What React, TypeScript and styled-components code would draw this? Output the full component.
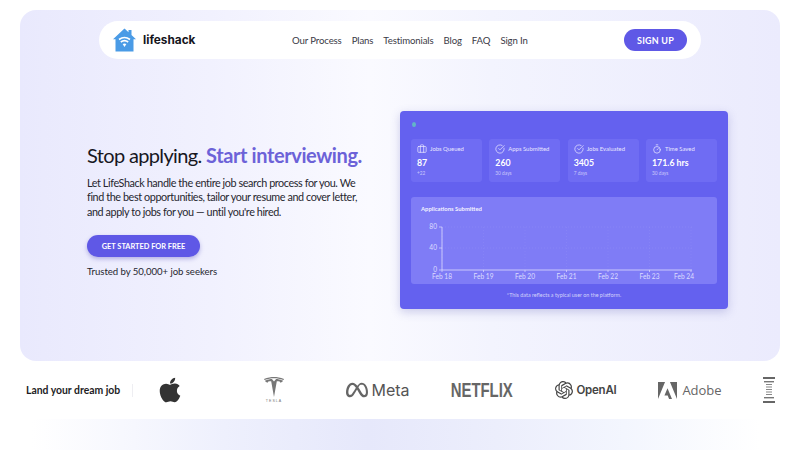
import styled, { createGlobalStyle } from "styled-components";
import { Briefcase, CircleCheckBig, Timer } from "lucide-react";
import { FaApple } from "react-icons/fa";
import { SiAdobe, SiMeta, SiOpenai, SiTesla } from "react-icons/si";

const GlobalStyle = createGlobalStyle`
  html, body {
    margin: 0;
    padding: 0;
    background: #fff;
    overflow: hidden;
  }
  * {
    box-sizing: border-box;
  }
  body {
    font-family: "Lato", "Liberation Sans", sans-serif;
    color: #1f1f2b;
  }
`;

const stats = [
  { title: "Jobs Queued", value: "87", note: "+22", Icon: Briefcase },
  { title: "Apps Submitted", value: "260", note: "30 days", Icon: CircleCheckBig },
  { title: "Jobs Evaluated", value: "3405", note: "7 days", Icon: CircleCheckBig },
  { title: "Time Saved", value: "171.6 hrs", note: "30 days", Icon: Timer },
];

const links = ["Our Process", "Plans", "Testimonials", "Blog", "FAQ", "Sign In"];
const days = ["Feb 18", "Feb 19", "Feb 20", "Feb 21", "Feb 22", "Feb 23", "Feb 24"];

function HouseLogo() {
  return (
    <svg width="23" height="24" viewBox="0 0 23 24">
      <path
        d="M11.5 0.5 L15.5 4.2 V2 H18.5 V7 L23 11.2 H20.5 V23.5 H2.5 V11.2 H0 Z"
        fill="#4a9be6"
      />
      <path d="M6 11.5 Q11.5 7.5 17 11.5" stroke="#fff" strokeWidth="1.6" fill="none" />
      <path d="M7.8 14 Q11.5 11.3 15.2 14" stroke="#fff" strokeWidth="1.6" fill="none" />
      <path d="M9.6 16 L11.5 19 L13.4 16 Q11.5 14.8 9.6 16 Z" fill="#fff" />
    </svg>
  );
}

function SubmittedChart() {
  return (
    <svg width="306" height="70" viewBox="0 0 306 70">
      {[0, 1, 2, 3, 4, 5, 6].map((i) => (
        <line
          key={i}
          x1={31 + i * 41.5}
          x2={31 + i * 41.5}
          y1="15"
          y2="58"
          stroke="#ffffff"
          strokeOpacity="0.06"
          strokeDasharray="1 2"
        />
      ))}
      <line x1="31" x2="281" y1="36" y2="36" stroke="#fff" strokeOpacity="0.07" strokeDasharray="1 2" />
      <line x1="31" x2="281" y1="15" y2="15" stroke="#fff" strokeOpacity="0.07" strokeDasharray="1 2" />
      <path d="M31 15 V58 H281" stroke="#dedcff" strokeWidth="0.8" fill="none" />
      {[15, 36, 58].map((y) => (
        <line key={y} x1="28" x2="31" y1={y} y2={y} stroke="#dedcff" strokeWidth="0.7" />
      ))}
      {days.map((d, i) => (
        <g key={d}>
          <line
            x1={31 + i * 41.5}
            x2={31 + i * 41.5}
            y1="58"
            y2="60"
            stroke="#dedcff"
            strokeWidth="0.7"
          />
          <ChartLabel x={i === 6 ? 273 : 31 + i * 41.5} y="67" textAnchor="middle">
            {d}
          </ChartLabel>
        </g>
      ))}
      <ChartLabel x="26" y="17.2" textAnchor="end">80</ChartLabel>
      <ChartLabel x="26" y="38.2" textAnchor="end">40</ChartLabel>
      <ChartLabel x="26" y="60.2" textAnchor="end">0</ChartLabel>
    </svg>
  );
}

function StackMark() {
  return (
    <svg width="12" height="26" viewBox="0 0 12 26">
      <rect x="0" y="0" width="12" height="2" fill="#666" />
      <rect x="1" y="4" width="10" height="1.4" fill="#777" />
      {[7, 9.5, 12, 14.5, 17].map((y) => (
        <rect key={y} x="3" y={y} width="6" height="1" fill="#888" />
      ))}
      <rect x="1" y="20" width="10" height="1.4" fill="#777" />
      <rect x="0" y="24" width="12" height="2" fill="#666" />
    </svg>
  );
}

export default function App() {
  return (
    <>
      <GlobalStyle />
      <Page>
        <Hero>
          <Nav>
            <Brand>
              <HouseLogo />
              <BrandName>lifeshack</BrandName>
            </Brand>
            <NavLinks>
              {links.map((l) => (
                <NavLink key={l}>{l}</NavLink>
              ))}
            </NavLinks>
            <SignUp>SIGN UP</SignUp>
          </Nav>

          <HeroBody>
            <Pitch>
              <Headline>
                Stop applying. <Accent>Start interviewing.</Accent>
              </Headline>
              <Lead>
                Let LifeShack handle the entire job search process for you. We
                <br />
                find the best opportunities, tailor your resume and cover letter,
                <br />
                and apply to jobs for you — until you're hired.
              </Lead>
              <StartButton>GET STARTED FOR FREE</StartButton>
              <Trusted>Trusted by 50,000+ job seekers</Trusted>
            </Pitch>

            <Dashboard>
              <StatusDot />
              <StatGrid>
                {stats.map(({ title, value, note, Icon }) => (
                  <StatCard key={title}>
                    <StatHead>
                      <Icon size={10} strokeWidth={1.8} />
                      <span>{title}</span>
                    </StatHead>
                    <StatValue>{value}</StatValue>
                    <StatNote>{note}</StatNote>
                  </StatCard>
                ))}
              </StatGrid>
              <ChartPanel>
                <ChartTitle>Applications Submitted</ChartTitle>
                <SubmittedChart />
              </ChartPanel>
              <Footnote>*This data reflects a typical user on the platform.</Footnote>
            </Dashboard>
          </HeroBody>
        </Hero>

        <LogoRow>
          <RowLabel>Land your dream job</RowLabel>
          <Divider />
          <LogoSlot $color="#333">
            <FaApple size={28} />
          </LogoSlot>
          <LogoSlot $color="#777">
            <TeslaMark>
              <SiTesla size={20} />
              <TeslaWord>TESLA</TeslaWord>
            </TeslaMark>
          </LogoSlot>
          <LogoSlot $color="#666">
            <SiMeta size={22} />
            <MetaWord>Meta</MetaWord>
          </LogoSlot>
          <LogoSlot $color="#666">
            <NetflixWord>NETFLIX</NetflixWord>
          </LogoSlot>
          <LogoSlot $color="#444">
            <SiOpenai size={18} />
            <OpenAiWord>OpenAI</OpenAiWord>
          </LogoSlot>
          <LogoSlot $color="#666">
            <SiAdobe size={19} />
            <AdobeWord>Adobe</AdobeWord>
          </LogoSlot>
          <LastSlot>
            <StackMark />
          </LastSlot>
        </LogoRow>

        <BottomBand />
      </Page>
    </>
  );
}

const ChartLabel = styled.text`
  font-family: "Lato", sans-serif;
  font-size: 6.6px;
  fill: #dddcff;
`;

const Page = styled.div`
  width: 800px;
  height: 450px;
  padding-top: 10px;
  display: flex;
  flex-direction: column;
  overflow: hidden;
`;

const Hero = styled.section`
  margin: 0 20px;
  height: 351px;
  padding-top: 11px;
  border-radius: 16px;
  background: linear-gradient(90deg, #e9e9fd 0%, #f1f1fe 25%, #fafaff 46%, #f3f4fe 62%, #ebebfd 100%);
`;

const Nav = styled.nav`
  width: 602px;
  height: 38px;
  margin: 0 auto;
  padding: 0 14px;
  display: flex;
  align-items: center;
  background: #fff;
  border-radius: 19px;
`;

const Brand = styled.div`
  display: flex;
  align-items: center;
  gap: 7px;
  width: 179px;
`;

const BrandName = styled.span`
  font-family: "Inter", "Liberation Sans", sans-serif;
  font-size: 11.8px;
  font-weight: 700;
  color: #15151c;
`;

const NavLinks = styled.div`
  display: flex;
  align-items: center;
  gap: 10px;
  flex: 1;
`;

const NavLink = styled.a`
  font-size: 9.6px;
  letter-spacing: -0.12px;
  color: #3a3a46;
`;

const SignUp = styled.button`
  width: 63px;
  height: 22px;
  border: 0;
  border-radius: 11px;
  background: #5f58e6;
  color: #fff;
  font-family: inherit;
  font-size: 9px;
  font-weight: 700;
  letter-spacing: 0.2px;
`;

const HeroBody = styled.div`
  margin-top: 52px;
  padding-left: 67px;
  display: flex;
  align-items: center;
`;

const Pitch = styled.div`
  width: 313px;
  display: flex;
  flex-direction: column;
  align-items: flex-start;
`;

const Headline = styled.h1`
  margin: 0 0 8px;
  font-size: 20px;
  line-height: 26px;
  font-weight: 400;
  letter-spacing: -0.65px;
  white-space: nowrap;
  color: #17171f;
`;

const Accent = styled.span`
  font-weight: 700;
  letter-spacing: -0.4px;
  color: #6c62d8;
`;

const Lead = styled.p`
  margin: 0 0 16px;
  font-size: 10.8px;
  line-height: 14.6px;
  letter-spacing: -0.4px;
  white-space: nowrap;
  color: #26262f;
`;

const StartButton = styled.button`
  width: 113px;
  height: 22px;
  margin-bottom: 9px;
  border: 0;
  border-radius: 11px;
  background: #5f58e6;
  color: #fff;
  font-family: inherit;
  font-size: 7.4px;
  font-weight: 700;
  box-shadow: 0 2px 4px rgba(70, 60, 180, 0.35);
`;

const Trusted = styled.div`
  font-size: 9.6px;
  line-height: 12px;
  letter-spacing: -0.05px;
  color: #26262f;
`;

const Dashboard = styled.div`
  width: 328px;
  height: 198px;
  padding: 11px 11px 0;
  border-radius: 4px;
  background: #6461ef;
  box-shadow: 0 3px 10px rgba(70, 70, 170, 0.25);
  display: flex;
  flex-direction: column;
`;

const StatusDot = styled.div`
  width: 4px;
  height: 5px;
  margin: 0 0 12px 1px;
  border-radius: 50%;
  background: #62b5c8;
`;

const StatGrid = styled.div`
  display: grid;
  grid-template-columns: repeat(4, 71px);
  justify-content: space-between;
`;

const StatCard = styled.div`
  height: 43px;
  padding: 5px 6px 0;
  border-radius: 3px;
  background: #6f6cf3;
  color: #fff;
`;

const StatHead = styled.div`
  display: flex;
  align-items: center;
  gap: 3px;
  font-size: 5.9px;
  line-height: 10px;
  white-space: nowrap;
  color: #e7e6ff;
`;

const StatValue = styled.div`
  margin-top: 3px;
  font-size: 8.8px;
  line-height: 11px;
  font-weight: 700;
`;

const StatNote = styled.div`
  margin-top: 2px;
  font-size: 4.8px;
  line-height: 7px;
  color: #c9c8fb;
`;

const ChartPanel = styled.div`
  height: 87px;
  margin-top: 15px;
  padding-top: 8px;
  border-radius: 3px;
  background: #7f7cf6;
`;

const ChartTitle = styled.div`
  padding-left: 10px;
  font-size: 5.9px;
  line-height: 8px;
  font-weight: 700;
  color: #f2f1ff;
  margin-bottom: -1px;
`;

const Footnote = styled.div`
  margin-top: 7px;
  text-align: center;
  font-size: 5.4px;
  line-height: 8px;
  color: #d3d2fb;
`;

const LogoRow = styled.div`
  height: 58px;
  padding-left: 26px;
  display: flex;
  align-items: center;
  gap: 40px;
  overflow: hidden;
`;

const RowLabel = styled.div`
  width: 94px;
  margin-right: -28px;
  font-size: 10.4px;
  font-weight: 700;
  white-space: nowrap;
  color: #1d1d24;
`;

const Divider = styled.div`
  width: 1px;
  height: 13px;
  margin-right: -35px;
  background: #eeeef2;
`;

const LogoSlot = styled.div<{ $color: string }>`
  width: 64px;
  flex: none;
  display: flex;
  align-items: center;
  justify-content: center;
  gap: 3px;
  color: ${(p) => p.$color};
`;

const LastSlot = styled.div`
  width: 14px;
  flex: none;
  display: flex;
  justify-content: center;
`;

const TeslaMark = styled.div`
  display: flex;
  flex-direction: column;
  align-items: center;
  gap: 2px;
`;

const TeslaWord = styled.span`
  font-size: 3.6px;
  letter-spacing: 1px;
  font-family: "Liberation Sans", sans-serif;
`;

const MetaWord = styled.span`
  font-family: "Inter", "Liberation Sans", sans-serif;
  font-size: 16px;
  color: #555;
`;

const NetflixWord = styled.span`
  display: inline-block;
  font-family: "Liberation Sans", sans-serif;
  font-size: 21px;
  font-weight: 700;
  white-space: nowrap;
  transform: scaleX(0.71);
`;

const OpenAiWord = styled.span`
  font-family: "Inter", "Liberation Sans", sans-serif;
  font-size: 11.5px;
  font-weight: 600;
  letter-spacing: -0.2px;
`;

const AdobeWord = styled.span`
  font-family: "Open Sans", "Liberation Sans", sans-serif;
  font-size: 13px;
  font-weight: 500;
  margin-left: 2px;
`;

const BottomBand = styled.div`
  height: 31px;
  background: linear-gradient(90deg, #fff 4%, #eef0fd 28%, #e6e8fb 46%, #eceefc 62%, #f3f6fe 78%, #fff 95%);
`;
